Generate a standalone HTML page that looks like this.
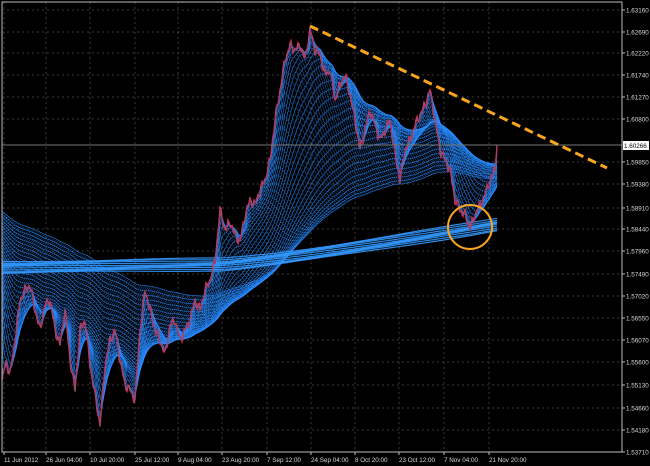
<!DOCTYPE html><html><head><style>
body{margin:0;background:#000;width:650px;height:466px;overflow:hidden;font-family:"Liberation Sans",sans-serif}
svg{display:block}
</style></head><body>
<svg id="s" width="650" height="466" xmlns="http://www.w3.org/2000/svg">
<rect width="650" height="466" fill="#000"/>
<g id="grid" stroke="#3a3a3a" stroke-dasharray="2,3" stroke-width="1"></g>
<g id="mesh"></g>
<line x1="2" y1="145" x2="622" y2="145" stroke="#777" stroke-width="1"/>
<rect x="2" y="2" width="620" height="450" fill="none" stroke="#bbb" stroke-width="1"/>
<g id="lbl" font-size="6.3" fill="#d8d8d8"></g>
<line x1="310" y1="26" x2="607" y2="168" stroke="#f7a51d" stroke-width="3" stroke-dasharray="9,5"/>
<circle cx="470" cy="227" r="22" fill="none" stroke="#f7a51d" stroke-width="2"/>
<rect x="623" y="141" width="26" height="9" fill="#fff"/>
<text x="624" y="148" font-size="6.3" fill="#000">1.60266</text>
</svg>
<script>
var NS="http://www.w3.org/2000/svg",s=document.getElementById('s');
function el(p,t,a){var e=document.createElementNS(NS,t);for(var k in a)e.setAttribute(k,a[k]);p.appendChild(e);return e;}
var ys=[10,32,53,75,97,119,162,184,208,229,251,274,296,318,340,362,385,408,430,452];
var yl=["1.63160","1.62690","1.62220","1.61740","1.61270","1.60800","1.59850","1.59380","1.58910","1.58440","1.57960","1.57490","1.57020","1.56550","1.56070","1.55600","1.55130","1.54660","1.54180","1.53710"];
var g=document.getElementById('grid'),L=document.getElementById('lbl');
ys.forEach(function(y,i){el(g,'line',{x1:2,y1:y,x2:622,y2:y});el(L,'line',{x1:622,y1:y,x2:625,y2:y,stroke:'#bbb'});var t=el(L,'text',{x:626,y:y+2.5});t.textContent=yl[i];});
var xs=[4,46,90,135,178,222,267,311,355,399,444,489];
var xl=["11 Jun 2012","26 Jun 04:00","10 Jul 20:00","25 Jul 12:00","9 Aug 04:00","23 Aug 20:00","7 Sep 12:00","24 Sep 04:00","8 Oct 20:00","23 Oct 12:00","7 Nov 04:00","21 Nov 20:00"];
xs.forEach(function(x,i){el(g,'line',{x1:x,y1:2,x2:x,y2:452});el(L,'line',{x1:x,y1:452,x2:x,y2:455,stroke:'#bbb'});var t=el(L,'text',{x:x,y:462});t.textContent=xl[i];});
var P=[[2,380],[6,362],[10,375],[15,340],[20,300],[25,290],[30,285],[35,310],[40,330],[45,305],[50,300],[55,330],[60,345],[65,310],[70,360],[75,390],[80,330],[85,320],[90,365],[95,395],[100,425],[105,365],[110,340],[115,330],[120,360],[125,385],[130,390],[135,400],[140,330],[145,290],[150,310],[155,330],[160,340],[165,355],[170,325],[175,320],[180,340],[185,330],[190,320],[195,300],[200,310],[205,290],[210,280],[215,262],[220,210],[225,230],[230,222],[235,235],[240,242],[245,215],[250,200],[255,205],[260,190],[265,180],[270,160],[275,120],[280,90],[285,60],[290,45],[295,50],[300,45],[305,60],[310,30],[315,50],[320,55],[325,75],[330,70],[335,100],[340,85],[345,75],[350,95],[355,120],[360,150],[365,130],[370,110],[375,125],[380,140],[385,130],[390,120],[395,155],[400,180],[405,150],[410,140],[415,125],[420,115],[425,105],[430,90],[435,120],[440,150],[445,160],[450,170],[455,200],[460,210],[465,215],[470,228],[475,215],[480,205],[485,195],[490,180],[495,170],[497,145]];
var pr=[];for(var x=2;x<=497;x++){for(var i=0;i<P.length-1;i++)if(x>=P[i][0]&&x<=P[i+1][0]){var f=(x-P[i][0])/(P[i+1][0]-P[i][0]);var n=(x<497)?(Math.sin(x*1.7)*3+Math.sin(x*0.9+1)*2.5):0;pr.push([x,P[i][1]+f*(P[i+1][1]-P[i][1])+n]);break;}}
var M=document.getElementById('mesh');
function pts(a){return a.map(function(p){return p[0]+','+p[1].toFixed(1)}).join(' ');}
var mas=[pr];
var N=30;
for(var k=1;k<=N;k++){var per=1+k*k*0.4,a=2/(per+1),v=300-k*3,arr=[];pr.forEach(function(p){v=v+a*(p[1]-v);arr.push([p[0],v]);});mas.push(arr);}
for(var k=0;k<N;k++){var A=mas[k],B=mas[k+1];for(var j=0;j+3<A.length;j+=2){el(M,'line',{x1:A[j][0],y1:A[j][1].toFixed(1),x2:B[j+3][0],y2:B[j+3][1].toFixed(1),stroke:'#1f80ee','stroke-width':0.5,opacity:0.8});}}
for(var k=1;k<=N;k++)el(M,'polyline',{points:pts(mas[k]),fill:'none',stroke:'#2a8cff','stroke-width':0.6,opacity:0.85});
for(var b=0;b<10;b++){var arr=[];for(var x=2;x<=497;x+=3){var base=x<220?268-(x/220)*3:265-Math.pow((x-220)/277,1.2)*40;arr.push([x,base+(b-5)*1.3+Math.sin(x/40+b)*0.8]);}el(M,'polyline',{points:pts(arr),fill:'none',stroke:'#3399ff','stroke-width':1.2,opacity:0.9});}
el(M,'polyline',{points:pts(pr),fill:'none',stroke:'#ff1a1a','stroke-width':1.5});
el(M,'polyline',{points:pts(pr),fill:'none',stroke:'#1f78e0','stroke-width':0.5});
</script>
</body></html>
